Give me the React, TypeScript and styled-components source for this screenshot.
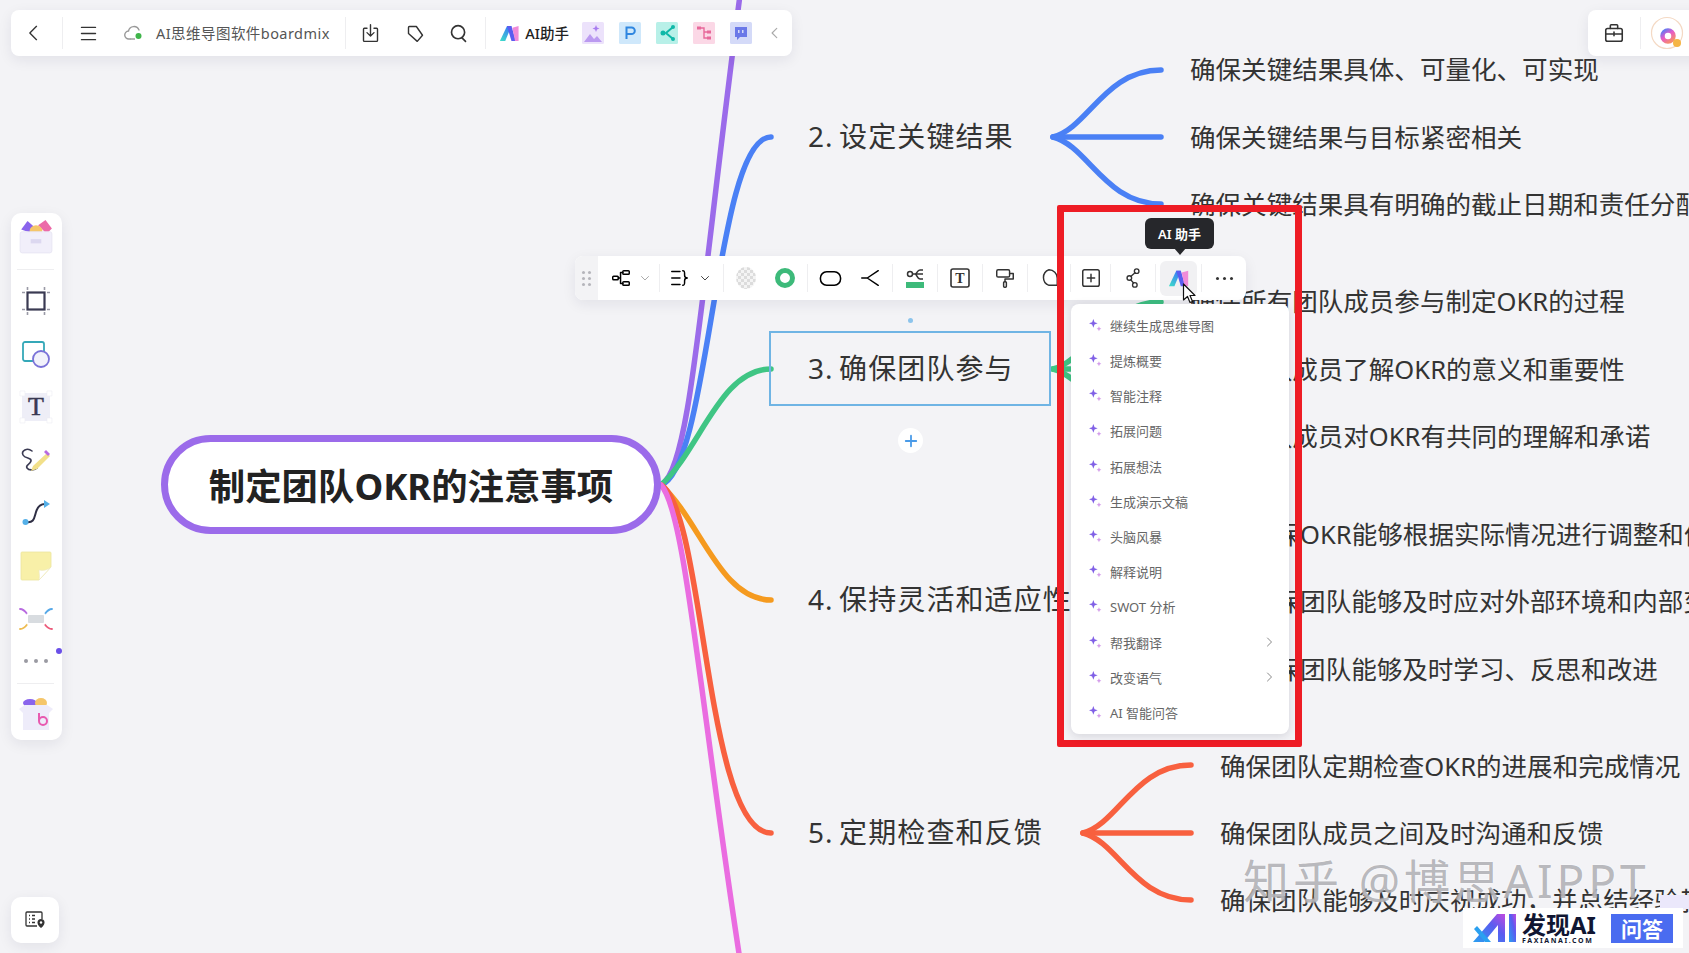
import React from 'react';
import styled, { createGlobalStyle } from 'styled-components';

const GlobalStyle = createGlobalStyle`
  html, body {
    margin: 0;
    height: 100%;
    overflow: hidden;
    background: #f3f3f6;
    font-family: "Noto Sans", "Noto Sans CJK SC", sans-serif;
  }
`;

const Canvas = styled.div`
  position: relative;
  width: 1689px;
  height: 953px;
  overflow: hidden;
  background: #f3f3f6;
`;

const MapLines = styled.svg`
  position: absolute;
  left: 0;
  top: 0;
`;

const RootNode = styled.div`
  position: absolute;
  left: 161px;
  top: 435px;
  width: 500px;
  height: 99px;
  box-sizing: border-box;
  border: 7px solid #9b6bea;
  border-radius: 50px;
  background: #fff;
  display: flex;
  align-items: center;
  justify-content: center;
  font-size: 36.4px;
  font-weight: 700;
  color: #222;
`;

const TopicLabel = styled.div<{ $x: number; $y: number }>`
  position: absolute;
  left: ${(p) => p.$x}px;
  top: ${(p) => p.$y - 2}px;
  transform: translateY(-50%);
  font-size: 28px;
  letter-spacing: 1.1px;
  word-spacing: -3px;
  color: #333;
  white-space: nowrap;
`;

const LeafLabel = styled.div<{ $x: number; $y: number }>`
  position: absolute;
  left: ${(p) => p.$x}px;
  top: ${(p) => p.$y - 2}px;
  transform: translateY(-50%);
  font-size: 25.55px;
  color: #333;
  white-space: nowrap;
`;

const SelectedBox = styled.div`
  position: absolute;
  left: 769px;
  top: 331px;
  width: 282px;
  height: 75px;
  box-sizing: border-box;
  border: 2px solid #6fb4e4;
`;

const AnchorDot = styled.div`
  position: absolute;
  left: 908px;
  top: 318px;
  width: 5px;
  height: 5px;
  border-radius: 50%;
  background: #8cc4ec;
`;

const AddButton = styled.div`
  position: absolute;
  left: 898px;
  top: 428px;
  width: 25px;
  height: 25px;
  border-radius: 50%;
  background: #fff;
  color: #4a9be8;
  display: flex;
  align-items: center;
  justify-content: center;
`;

const Card = styled.div`
  position: absolute;
  background: #fff;
  border-radius: 8px;
  box-shadow: 0 4px 14px rgba(30, 30, 60, 0.08);
`;

const TopBar = styled(Card)`
  left: 11px;
  top: 10px;
  width: 781px;
  height: 46px;
  display: flex;
  align-items: center;
`;

const TopRight = styled(Card)`
  left: 1588px;
  top: 10px;
  width: 120px;
  height: 46px;
  display: flex;
  align-items: center;
`;

const Sep = styled.div<{ $h?: number }>`
  width: 1px;
  height: ${(p) => p.$h ?? 32}px;
  background: #eeeef0;
  flex: none;
`;

const BarSlot = styled.div<{ $w: number; $shift?: number }>`
  width: ${(p) => p.$w}px;
  box-sizing: border-box;
  padding-right: ${(p) => p.$shift ?? 0}px;
  flex: none;
  display: flex;
  align-items: center;
  justify-content: center;
  color: #333;
`;

const DocTitle = styled.div`
  margin: -2px 15px 0 5px;
  width: 174px;
  flex: none;
  font-size: 14.5px;
  letter-spacing: 0.45px;
  color: #555;
  white-space: nowrap;
`;

const AiLabel = styled.div`
  margin: -2px 0 0 5px;
  font-size: 14.5px;
  font-weight: 500;
  color: #222;
  white-space: nowrap;
`;

const AppIcons = styled.div`
  display: flex;
  align-items: center;
  gap: 15px;
  margin-left: 13px;
`;

const Tint = styled.span<{ $color: string }>`
  display: flex;
  color: ${(p) => p.$color};
`;

const LeftBar = styled(Card)`
  left: 11px;
  top: 213px;
  width: 51px;
  height: 527px;
  box-sizing: border-box;
  padding-right: 2px;
  border-radius: 10px;
  display: flex;
  flex-direction: column;
  align-items: center;
`;

const LeftSlot = styled.div<{ $h: number }>`
  height: ${(p) => p.$h}px;
  width: 100%;
  flex: none;
  position: relative;
  display: flex;
  align-items: center;
  justify-content: center;
`;

const LeftRule = styled.div<{ $top: number; $bottom: number }>`
  width: 37px;
  height: 1px;
  flex: none;
  background: #eeeef0;
  margin: ${(p) => p.$top}px 0 ${(p) => p.$bottom}px;
`;

const NoticeDot = styled.span`
  position: absolute;
  right: -2px;
  top: 3px;
  width: 6px;
  height: 6px;
  border-radius: 50%;
  background: #6a4fe8;
`;

const MoreDots = styled.div<{ $gap: number }>`
  display: flex;
  gap: ${(p) => p.$gap}px;
`;

const Dot = styled.span<{ $size: number; $color: string }>`
  width: ${(p) => p.$size}px;
  height: ${(p) => p.$size}px;
  border-radius: 50%;
  background: ${(p) => p.$color};
`;

const ViewButton = styled(Card)`
  left: 11px;
  top: 897px;
  width: 48px;
  height: 46px;
  border-radius: 10px;
  display: flex;
  align-items: center;
  justify-content: center;
`;

const NodeToolbar = styled(Card)`
  left: 575px;
  top: 256px;
  width: 671px;
  height: 44px;
  display: flex;
  align-items: center;
  overflow: hidden;
`;

const Grip = styled.div`
  width: 23px;
  height: 100%;
  flex: none;
  background: #f3f3f5;
  display: grid;
  grid-template-columns: 3px 3px;
  gap: 3px 3px;
  align-content: center;
  justify-content: center;
`;

const GripDot = styled.span`
  width: 3px;
  height: 3px;
  border-radius: 50%;
  background: #b5b5bb;
`;

const ToolGroup = styled.div<{ $w: number; $pad: number; $gap: number }>`
  width: ${(p) => p.$w}px;
  box-sizing: border-box;
  flex: none;
  padding-left: ${(p) => p.$pad}px;
  display: flex;
  align-items: center;
  gap: ${(p) => p.$gap}px;
`;

const ToolCell = styled.div<{ $w?: number }>`
  width: ${(p) => p.$w ?? 44}px;
  height: 44px;
  flex: none;
  display: flex;
  align-items: center;
  justify-content: center;
  color: #333;
`;

const ActiveTool = styled.div`
  width: 37px;
  height: 35px;
  border-radius: 6px;
  background: #f1f1f3;
  display: flex;
  align-items: center;
  justify-content: center;
`;

const Tooltip = styled.div`
  position: absolute;
  left: 1145px;
  top: 218px;
  width: 69px;
  height: 31px;
  border-radius: 6px;
  background: #26272b;
  color: #fff;
  font-size: 13px;
  font-weight: 600;
  display: flex;
  align-items: center;
  justify-content: center;
  &::after {
    content: '';
    position: absolute;
    left: 29px;
    bottom: -6px;
    border-left: 6px solid transparent;
    border-right: 6px solid transparent;
    border-top: 7px solid #26272b;
  }
`;

const RedFrame = styled.div`
  position: absolute;
  left: 1057px;
  top: 205px;
  width: 245px;
  height: 542px;
  box-sizing: border-box;
  border: 7px solid #ee1c25;
  border-radius: 2px;
  display: flex;
  flex-direction: column;
  justify-content: flex-end;
  padding: 0 6px 6px 7px;
`;

const AiMenu = styled.div`
  background: #fff;
  border-radius: 8px;
  padding: 4px 0;
  box-shadow: 0 2px 10px rgba(30, 30, 60, 0.14);
`;

const AiRow = styled.div`
  height: 35.2px;
  display: flex;
  align-items: center;
  padding: 0 14px 0 18px;
  gap: 8px;
  font-size: 13px;
  color: #666;
  white-space: nowrap;
`;

const RowArrow = styled.span`
  margin-left: auto;
  display: flex;
  color: #888;
`;

const Cursor = styled.svg`
  position: absolute;
  left: 1182px;
  top: 283px;
`;

const Watermark = styled.div`
  position: absolute;
  left: 1243px;
  top: 845px;
  font-size: 46px;
  letter-spacing: 3.9px;
  color: rgba(150, 150, 156, 0.68);
  text-shadow: 0 0 2px rgba(255, 255, 255, 0.9);
  white-space: nowrap;
`;

const Lavender = styled.div`
  position: absolute;
  left: 1660px;
  top: 895px;
  width: 29px;
  height: 14px;
  background: #ebe8fb;
`;

const Badge = styled.div`
  position: absolute;
  left: 1463px;
  top: 908px;
  width: 220px;
  height: 40px;
  background: #fff;
  display: flex;
  align-items: center;
  padding-left: 10px;
  box-sizing: border-box;
`;

const BadgeText = styled.div`
  margin-left: 5px;
  display: flex;
  flex-direction: column;
  align-items: flex-start;
  color: #101632;
`;

const BadgeName = styled.div`
  font-size: 24px;
  line-height: 25px;
  font-weight: 700;
  white-space: nowrap;
`;

const BadgeSite = styled.div`
  font-size: 7px;
  line-height: 8px;
  font-weight: 700;
  letter-spacing: 1.6px;
  white-space: nowrap;
`;

const BadgeAsk = styled.div`
  margin-left: 15px;
  width: 62px;
  height: 29px;
  background: #4a6cf0;
  color: #fff;
  font-size: 21px;
  font-weight: 700;
  display: flex;
  align-items: center;
  justify-content: center;
`;

const Stroke = ({ size = 22, width = 1.6, children }: { size?: number; width?: number; children: React.ReactNode }) => (
  <svg width={size} height={size} viewBox="0 0 24 24" fill="none" stroke="currentColor" strokeWidth={width} strokeLinecap="round" strokeLinejoin="round">
    {children}
  </svg>
);

const Chevron = ({ dir = 'right', size = 12 }: { dir?: 'left' | 'right' | 'down'; size?: number }) => {
  const d = dir === 'left' ? 'M15 4l-8 8 8 8' : dir === 'right' ? 'M9 4l8 8-8 8' : 'M5 9l7 7 7-7';
  return <Stroke size={size} width={2}><path d={d} /></Stroke>;
};

const AiMark = ({ size = 22 }: { size?: number }) => (
  <svg width={size} height={size} viewBox="0 0 24 24">
    <defs>
      <linearGradient id="aim" x1="0" y1="1" x2="0.6" y2="0">
        <stop offset="0" stopColor="#3ee0c8" />
        <stop offset="1" stopColor="#3a7cf5" />
      </linearGradient>
    </defs>
    <path d="M1 21L9 4h5L7 21z" fill="url(#aim)" />
    <path d="M9 4h5l5 17h-5z" fill="#5a5cf0" />
    <path d="M15 6l7-2v17h-4z" fill="#f08ad8" />
  </svg>
);

const Sparkle = () => (
  <svg width="13" height="13" viewBox="0 0 12 12">
    <path d="M4 0L5.100 2.900 8 4 5.100 5.100 4 8 2.900 5.100 0 4 2.900 2.900z" fill="#8060e6" />
    <path d="M9.200 6.800l.7 1.500 1.500.7-1.500.7-.7 1.500-.7-1.500L7 9l1.500-.7z" fill="#d39cea" />
  </svg>
);

const AppTile = ({ bg, children }: { bg: string; children: React.ReactNode }) => (
  <svg width="22" height="22" viewBox="0 0 22 22">
    <rect width="22" height="22" rx="1.500" fill={bg} />
    {children}
  </svg>
);

const TopApps = () => (
  <AppIcons>
    <AppTile bg="#ece2fb">
      <path d="M2 20l6-8 4 5 3-3 5 6z" fill="#bb9af0" />
      <path d="M14 3l1 2.500 2.500 1L15 7.500 14 10l-1-2.500L10.500 6.500 13 5.500z" fill="#a87cf0" />
    </AppTile>
    <AppTile bg="#cfe8fb">
      <path d="M7.500 17V5.500h5a3.300 3.300 0 010 6.600h-5" fill="none" stroke="#2f86e0" strokeWidth="2" />
    </AppTile>
    <AppTile bg="#b8f0e8">
      <path d="M17 5l-7 6 7 6" fill="none" stroke="#10b8a8" strokeWidth="2" />
      <circle cx="7" cy="11" r="2.500" fill="#10b8a8" />
      <circle cx="17" cy="5" r="2" fill="#10b8a8" />
      <circle cx="17" cy="17" r="2" fill="#10b8a8" />
    </AppTile>
    <AppTile bg="#fbd8e6">
      <path d="M7 6h4v10h4M11 10h4" fill="none" stroke="#e8689a" strokeWidth="1.400" />
      <rect x="4" y="4.500" width="4" height="3" fill="#e8689a" />
      <rect x="14" y="8.500" width="4" height="3" fill="#e8689a" />
      <rect x="14" y="14.500" width="4" height="3" fill="#e8689a" />
    </AppTile>
    <AppTile bg="#d4daf8">
      <path d="M5 5h12v10h-7l-3 3v-3H5z" fill="#6a78e8" />
      <rect x="8" y="8" width="1.500" height="3" fill="#d4daf8" />
      <rect x="12" y="8" width="1.500" height="3" fill="#d4daf8" />
    </AppTile>
  </AppIcons>
);

const ChestIcon = () => (
  <svg width="36" height="36" viewBox="0 0 34 34">
    <path d="M3 10l6-8 7 6-4 5z" fill="#8a64ec" />
    <path d="M19 6l7-5 6 8-5 5z" fill="#ec6aa8" />
    <ellipse cx="17" cy="11" rx="6" ry="5" fill="#f5c66a" />
    <rect x="2" y="12" width="30" height="20" rx="2" fill="#f1effa" stroke="#e6e4f2" strokeWidth="0.800" />
    <rect x="12" y="19" width="10" height="4" fill="#dcd8f0" />
  </svg>
);

const FrameIcon = () => (
  <svg width="30" height="30" viewBox="0 0 30 30" fill="none">
    <rect x="6.500" y="6.500" width="17" height="17" stroke="#3a3a52" strokeWidth="2.200" />
    <path d="M6.500 1v3M23.500 1v3M6.500 26v3M23.500 26v3M1 6.500h3M26 6.500h3M1 23.500h3M26 23.500h3" stroke="#9a9aa6" strokeWidth="1.600" />
  </svg>
);

const ShapesIcon = () => (
  <svg width="30" height="30" viewBox="0 0 30 30" fill="none">
    <rect x="2" y="3" width="21" height="19" rx="2" stroke="#35a8b8" strokeWidth="1.800" />
    <circle cx="20" cy="20" r="8" fill="#f2f2fb" stroke="#7a72d8" strokeWidth="1.800" />
  </svg>
);

const TextToolIcon = () => (
  <svg width="34" height="34" viewBox="0 0 34 34">
    <rect x="3" y="3" width="28" height="28" fill="#eeeef7" />
    <path d="M1 1h5v5H1zM28 1h5v5h-5zM1 28h5v5H1zM28 28h5v5h-5z" fill="#fff" stroke="#ececf3" strokeWidth="0.600" />
    <text x="17" y="25" textAnchor="middle" fontFamily="Liberation Serif, serif" fontSize="26" stroke="#3a3a52" strokeWidth="0.500" fill="#3a3a52">T</text>
  </svg>
);

const PenIcon = () => (
  <svg width="32" height="30" viewBox="0 0 32 30" fill="none">
    <path d="M12 6C7 2 1 6 3 10s9 2 8 6-6 4-4 7 8 2 10 0" stroke="#3a3a52" strokeWidth="1.600" strokeLinecap="round" />
    <path d="M13 21l14-13 3 3-13 13-6 2z" fill="#f2e08a" />
    <path d="M26 5l4 4-2 2-4-4z" fill="#b86ae0" />
  </svg>
);

const ConnectorIcon = () => (
  <svg width="30" height="30" viewBox="0 0 30 30" fill="none">
    <path d="M5 24c8 1 8-3 10-10 1.500-5 5-8 9-8" stroke="#2e2e44" strokeWidth="2" />
    <circle cx="4.500" cy="24" r="3" fill="#55b0e8" />
    <path d="M23 2l6 4-6 4z" fill="#55b0e8" />
  </svg>
);

const StickyIcon = () => (
  <svg width="32" height="30" viewBox="0 0 32 30">
    <path d="M1 2a1 1 0 011-1h28a1 1 0 011 1v14L19 29H2a1 1 0 01-1-1z" fill="#f8f0a8" stroke="#ebe4a0" strokeWidth="0.800" />
    <path d="M31 16L19 29c1-3 0-7 0-10 4 1 9 0 12-3z" fill="#fff" stroke="#ece7c0" strokeWidth="0.600" />
  </svg>
);

const MindIcon = () => (
  <svg width="34" height="26" viewBox="0 0 34 26" fill="none" strokeWidth="1.800" strokeLinecap="round">
    <path d="M1 3c6 0 7 7 11 9" stroke="#b86ae0" />
    <path d="M33 3c-6 0-7 7-11 9" stroke="#55a8e8" />
    <path d="M1 23c6 0 7-6 11-9" stroke="#eebc50" />
    <path d="M33 23c-6 0-7-6-11-9" stroke="#ec5a7a" />
    <rect x="8" y="8" width="18" height="10" rx="2" fill="#d8dce0" stroke="#fff" strokeWidth="2" />
  </svg>
);

const GiftIcon = () => (
  <svg width="36" height="34" viewBox="0 0 36 34">
    <ellipse cx="12" cy="6" rx="7" ry="4" fill="#8a64ec" />
    <ellipse cx="23" cy="6" rx="6" ry="5" fill="#f5c66a" />
    <path d="M1 12l6-4h22l6 4-4 4v17H5V16z" fill="#eeecfa" />
    <circle cx="25" cy="24" r="4" fill="none" stroke="#e85ab0" strokeWidth="2" />
    <path d="M21 16v8" stroke="#e85ab0" strokeWidth="2" />
  </svg>
);

const LINES: { d: string; color: string }[] = [
  { d: 'M661 485C690 470 700 300 740 -5', color: '#9b6bea' },
  { d: 'M661 485C710 470 715 137 771 137', color: '#4a80f5' },
  { d: 'M661 485C700 450 720 369 771 369', color: '#3fc584' },
  { d: 'M661 485C700 520 720 600 771 600', color: '#f59a1f' },
  { d: 'M661 485C705 510 705 833 771 833', color: '#f8603f' },
  { d: 'M661 485C685 510 700 700 740 960', color: '#ea6ce0' },
  { d: 'M1053 137C1088 128 1105 70 1161 70', color: '#4a80f5' },
  { d: 'M1053 137H1161', color: '#4a80f5' },
  { d: 'M1053 137C1088 146 1105 204 1161 204', color: '#4a80f5' },
  { d: 'M1053 369C1088 360 1105 302 1161 302', color: '#3fc584' },
  { d: 'M1053 369H1161', color: '#3fc584' },
  { d: 'M1053 369C1088 378 1105 436 1161 436', color: '#3fc584' },
  { d: 'M1083 833C1118 824 1135 765 1191 765', color: '#f8603f' },
  { d: 'M1083 833H1191', color: '#f8603f' },
  { d: 'M1083 833C1118 842 1135 900 1191 900', color: '#f8603f' },
];

const TOPICS = [
  { text: '2. 设定关键结果', y: 137 },
  { text: '3. 确保团队参与', y: 369 },
  { text: '4. 保持灵活和适应性', y: 600 },
  { text: '5. 定期检查和反馈', y: 833 },
];

const LEAVES = [
  { text: '确保关键结果具体、可量化、可实现', x: 1190, y: 69 },
  { text: '确保关键结果与目标紧密相关', x: 1190, y: 137 },
  { text: '确保关键结果具有明确的截止日期和责任分配', x: 1190, y: 204 },
  { text: '确保所有团队成员参与制定OKR的过程', x: 1190, y: 301 },
  { text: '确保团队成员了解OKR的意义和重要性', x: 1190, y: 369 },
  { text: '确保团队成员对OKR有共同的理解和承诺', x: 1190, y: 436 },
  { text: '确保OKR能够根据实际情况进行调整和优化', x: 1249, y: 534 },
  { text: '确保团队能够及时应对外部环境和内部变化', x: 1249, y: 601 },
  { text: '确保团队能够及时学习、反思和改进', x: 1249, y: 669 },
  { text: '确保团队定期检查OKR的进展和完成情况', x: 1220, y: 766 },
  { text: '确保团队成员之间及时沟通和反馈', x: 1220, y: 833 },
  { text: '确保团队能够及时庆祝成功，并总结经验教训', x: 1220, y: 900 },
];

const AI_ITEMS = [
  { label: '继续生成思维导图' },
  { label: '提炼概要' },
  { label: '智能注释' },
  { label: '拓展问题' },
  { label: '拓展想法' },
  { label: '生成演示文稿' },
  { label: '头脑风暴' },
  { label: '解释说明' },
  { label: 'SWOT 分析' },
  { label: '帮我翻译', more: true },
  { label: '改变语气', more: true },
  { label: 'AI 智能问答' },
];

const App = () => (
  <Canvas>
    <GlobalStyle />

    <MapLines width="1689" height="953" fill="none" strokeWidth="5.5" strokeLinecap="round">
      {LINES.map((l) => (
        <path key={l.d} d={l.d} stroke={l.color} />
      ))}
    </MapLines>

    <RootNode>制定团队OKR的注意事项</RootNode>
    {TOPICS.map((t) => (
      <TopicLabel key={t.text} $x={808} $y={t.y}>{t.text}</TopicLabel>
    ))}
    {LEAVES.map((l) => (
      <LeafLabel key={l.text} $x={l.x} $y={l.y}>{l.text}</LeafLabel>
    ))}
    <SelectedBox />
    <AnchorDot />
    <AddButton>
      <Stroke size={18} width={2.4}><path d="M12 5v14M5 12h14" /></Stroke>
    </AddButton>

    <TopBar>
      <BarSlot $w={51} $shift={5}><Stroke size={20}><path d="M15 4l-8 8 8 8" /></Stroke></BarSlot>
      <Sep />
      <BarSlot $w={54} $shift={4}><Stroke size={21}><path d="M4 5h16M4 12h16M4 19h16" /></Stroke></BarSlot>
      <BarSlot $w={34}>
        <svg width="20" height="16" viewBox="0 0 20 16" fill="none">
          <path d="M6 14H5a4 4 0 01-.5-8A5.500 5.500 0 0115 5" stroke="#999" strokeWidth="1.400" strokeLinecap="round" />
          <path d="M6 14h5" stroke="#999" strokeWidth="1.400" />
          <circle cx="14.500" cy="11" r="3" fill="#3fb54a" />
        </svg>
      </BarSlot>
      <DocTitle>AI思维导图软件boardmix</DocTitle>
      <Sep />
      <BarSlot $w={50} $shift={2}>
        <Stroke size={21}><path d="M8 6H5a1 1 0 00-1 1v13a1 1 0 001 1h14a1 1 0 001-1V7a1 1 0 00-1-1h-3M12 2v12M8 11l4 4 4-4" /></Stroke>
      </BarSlot>
      <BarSlot $w={40} $shift={2}>
        <Stroke size={21}><path d="M4 5a1 1 0 011-1h8l7 10-6 7-10-9z" /></Stroke>
      </BarSlot>
      <BarSlot $w={46} $shift={2}>
        <Stroke size={21} width={1.9}><circle cx="11.500" cy="10.500" r="7.500" /><path d="M16 17l4 4" /></Stroke>
      </BarSlot>
      <BarSlot $w={3} />
      <Sep />
      <BarSlot $w={13} />
      <AiMark />
      <AiLabel>AI助手</AiLabel>
      <TopApps />
      <BarSlot $w={6} />
      <BarSlot $w={34}>
        <Tint $color="#aaa"><Chevron dir="left" size={14} /></Tint>
      </BarSlot>
    </TopBar>

    <TopRight>
      <BarSlot $w={52}>
        <Stroke size={22} width={1.7}><rect x="3" y="7" width="18" height="14" rx="2" /><path d="M8 7V4a1 1 0 011-1h6a1 1 0 011 1v3M3 13h18M12 11v4" /></Stroke>
      </BarSlot>
      <Sep />
      <BarSlot $w={52}>
        <svg width="34" height="34" viewBox="0 0 34 34" fill="none">
          <defs>
            <linearGradient id="blogo" x1="0" y1="0" x2="0.7" y2="1">
              <stop offset="0" stopColor="#5a7cf5" />
              <stop offset="0.5" stopColor="#e85ac8" />
              <stop offset="1" stopColor="#f58a70" />
            </linearGradient>
          </defs>
          <circle cx="17" cy="17" r="15.500" stroke="#f4d9c4" strokeWidth="1.200" fill="#fff" />
          <path d="M12.500 8v12" stroke="url(#blogo)" strokeWidth="4.500" strokeLinecap="round" />
          <circle cx="18" cy="20" r="5.500" stroke="url(#blogo)" strokeWidth="4.500" />
          <circle cx="27" cy="27" r="4" fill="#f5b544" />
        </svg>
      </BarSlot>
    </TopRight>

    <LeftBar>
      <LeftSlot $h={48}><ChestIcon /></LeftSlot>
      <LeftRule $top={8} $bottom={4} />
      <LeftSlot $h={53}><FrameIcon /></LeftSlot>
      <LeftSlot $h={53}><ShapesIcon /></LeftSlot>
      <LeftSlot $h={53}><TextToolIcon /></LeftSlot>
      <LeftSlot $h={53}><PenIcon /></LeftSlot>
      <LeftSlot $h={53}><ConnectorIcon /></LeftSlot>
      <LeftSlot $h={53}><StickyIcon /></LeftSlot>
      <LeftSlot $h={53}><MindIcon /></LeftSlot>
      <LeftSlot $h={32}>
        <MoreDots $gap={6}>
          <Dot $size={4} $color="#9a9aa2" />
          <Dot $size={4} $color="#9a9aa2" />
          <Dot $size={4} $color="#9a9aa2" />
        </MoreDots>
        <NoticeDot />
      </LeftSlot>
      <LeftRule $top={6} $bottom={4} />
      <LeftSlot $h={52}><GiftIcon /></LeftSlot>
    </LeftBar>

    <ViewButton>
      <svg width="22" height="18" viewBox="0 0 22 18" fill="none" stroke="#333" strokeWidth="1.300">
        <path d="M13 15H3a1 1 0 01-1-1V2a1 1 0 011-1h14a1 1 0 011 1v6" />
        <path d="M5 4.500h1M5 8h1M5 11.500h1M8 4.500h3M8 8h3M8 11.500h3" />
        <path d="M17 17s-3.500-2.500-3.500-5.500a3.500 3.500 0 017 0c0 3-3.500 5.500-3.500 5.500z" fill="#333" stroke="none" />
        <circle cx="17" cy="11.500" r="1.200" fill="#fff" stroke="none" />
      </svg>
    </ViewButton>

    <NodeToolbar>
      <Grip>
        {[0, 1, 2, 3, 4, 5].map((i) => <GripDot key={i} />)}
      </Grip>
      <ToolGroup $w={61} $pad={12} $gap={7}>
        <Stroke size={22}><rect x="3" y="10" width="6" height="4" rx="1" /><rect x="14" y="4" width="7" height="4" rx="1" /><rect x="14" y="16" width="7" height="4" rx="1" /><path d="M9 12h2.500V6H14M11.500 12v6H14" /></Stroke>
        <Tint $color="#aaa"><Chevron dir="down" /></Tint>
      </ToolGroup>
      <Sep $h={28} />
      <ToolGroup $w={63} $pad={9} $gap={8}>
        <Stroke size={22}><path d="M3 5h9M3 12h9M3 19h9M15 4c2 0 2 1 2 3v2c0 2 1 3 3 3-2 0-3 1-3 3v2c0 2 0 3-2 3" /></Stroke>
        <Tint $color="#444"><Chevron dir="down" /></Tint>
      </ToolGroup>
      <Sep $h={28} />
      <ToolGroup $w={83} $pad={11} $gap={17}>
        <svg width="22" height="22" viewBox="0 0 22 22">
          <defs>
            <pattern id="chk" width="6" height="6" patternUnits="userSpaceOnUse">
              <rect width="6" height="6" fill="#f4f4f4" />
              <rect width="3" height="3" fill="#dcdcdc" />
              <rect x="3" y="3" width="3" height="3" fill="#dcdcdc" />
            </pattern>
          </defs>
          <ellipse cx="11" cy="11" rx="10" ry="11" fill="url(#chk)" />
        </svg>
        <svg width="22" height="22" viewBox="0 0 22 22" fill="none">
          <circle cx="11" cy="11" r="7.500" stroke="#3dba7a" strokeWidth="5" />
        </svg>
      </ToolGroup>
      <Sep $h={28} />
      <ToolGroup $w={84} $pad={11} $gap={17}>
        <Stroke size={23}><rect x="1.500" y="5" width="21" height="14" rx="6.500" /></Stroke>
        <Stroke size={22}><path d="M3 12h6M21 4l-12 8 12 8" /></Stroke>
      </ToolGroup>
      <Sep $h={28} />
      <ToolCell>
        <svg width="22" height="22" viewBox="0 0 22 22" fill="none" stroke="#333" strokeWidth="1.500">
          <circle cx="6" cy="7" r="2.500" />
          <path d="M8.500 7H11c2 0 2-4 5-4h3M11 7c2 0 2 5 5 5h3M11 7h8" />
          <rect x="2" y="15" width="18" height="6" fill="#3dba7a" stroke="none" />
        </svg>
      </ToolCell>
      <Sep $h={28} />
      <ToolCell>
        <svg width="22" height="22" viewBox="0 0 22 22">
          <rect x="2" y="2" width="18" height="18" rx="2" fill="none" stroke="#333" strokeWidth="1.600" />
          <text x="11" y="16" textAnchor="middle" fontFamily="Liberation Serif, serif" fontWeight="700" fontSize="14" fill="#333">T</text>
        </svg>
      </ToolCell>
      <Sep $h={28} />
      <ToolCell>
        <Stroke size={22}><rect x="3" y="3" width="14" height="8" rx="1.500" /><path d="M17 7h4v6h-9v3" /><rect x="10.500" y="16" width="3" height="6" rx="1" /></Stroke>
      </ToolCell>
      <Sep $h={28} />
      <ToolCell $w={42}>
        <Stroke size={22}><path d="M12 3a9 9 0 019 9v8H12A9 9 0 0112 3z" /></Stroke>
      </ToolCell>
      <Sep $h={28} />
      <ToolCell $w={39}>
        <Stroke size={22}><rect x="3" y="3" width="18" height="18" rx="2" /><path d="M12 8v8M8 12h8" /></Stroke>
      </ToolCell>
      <Sep $h={28} />
      <ToolCell>
        <Stroke size={22} width={1.5}><circle cx="16" cy="4.500" r="2.500" /><circle cx="8" cy="12" r="2.500" /><circle cx="14" cy="19.500" r="2.500" /><path d="M14.200 6.300L9.800 10.200M9.600 14l3 3.500" /></Stroke>
      </ToolCell>
      <Sep $h={28} />
      <ToolCell $w={45}><ActiveTool><AiMark size={22} /></ActiveTool></ToolCell>
      <Sep $h={28} />
      <ToolCell>
        <MoreDots $gap={4}>
          <Dot $size={3} $color="#333" />
          <Dot $size={3} $color="#333" />
          <Dot $size={3} $color="#333" />
        </MoreDots>
      </ToolCell>
    </NodeToolbar>

    <RedFrame>
      <AiMenu>
        {AI_ITEMS.map((item) => (
          <AiRow key={item.label}>
            <Sparkle />
            {item.label}
            {item.more && <RowArrow><Chevron size={12} /></RowArrow>}
          </AiRow>
        ))}
      </AiMenu>
    </RedFrame>

    <Tooltip>AI 助手</Tooltip>
    <Cursor width="14" height="22" viewBox="0 0 14 22">
      <path d="M1.500 1v16l4-3.500 2.500 6 2.500-1-2.500-6h5z" fill="#fff" stroke="#111" strokeWidth="1.200" strokeLinejoin="round" />
    </Cursor>

    <Watermark>知乎 @博思AIPPT</Watermark>
    <Lavender />
    <Badge>
      <svg width="44" height="32" viewBox="0 0 44 32">
        <defs>
          <linearGradient id="fx" x1="0" y1="1" x2="1" y2="0">
            <stop offset="0" stopColor="#2aa0f0" />
            <stop offset="0.6" stopColor="#5a5cf0" />
            <stop offset="1" stopColor="#c04ae0" />
          </linearGradient>
        </defs>
        <path d="M0 30L24 2h8v28h-7V13L11 30z" fill="url(#fx)" />
        <path d="M36 2h7v28h-7z" fill="url(#fx)" />
        <path d="M4 14l14 16h-6L1 17z" fill="#2aa0f0" />
      </svg>
      <BadgeText>
        <BadgeName>发现AI</BadgeName>
        <BadgeSite>FAXIANAI.COM</BadgeSite>
      </BadgeText>
      <BadgeAsk>问答</BadgeAsk>
    </Badge>
  </Canvas>
);

export default App;
